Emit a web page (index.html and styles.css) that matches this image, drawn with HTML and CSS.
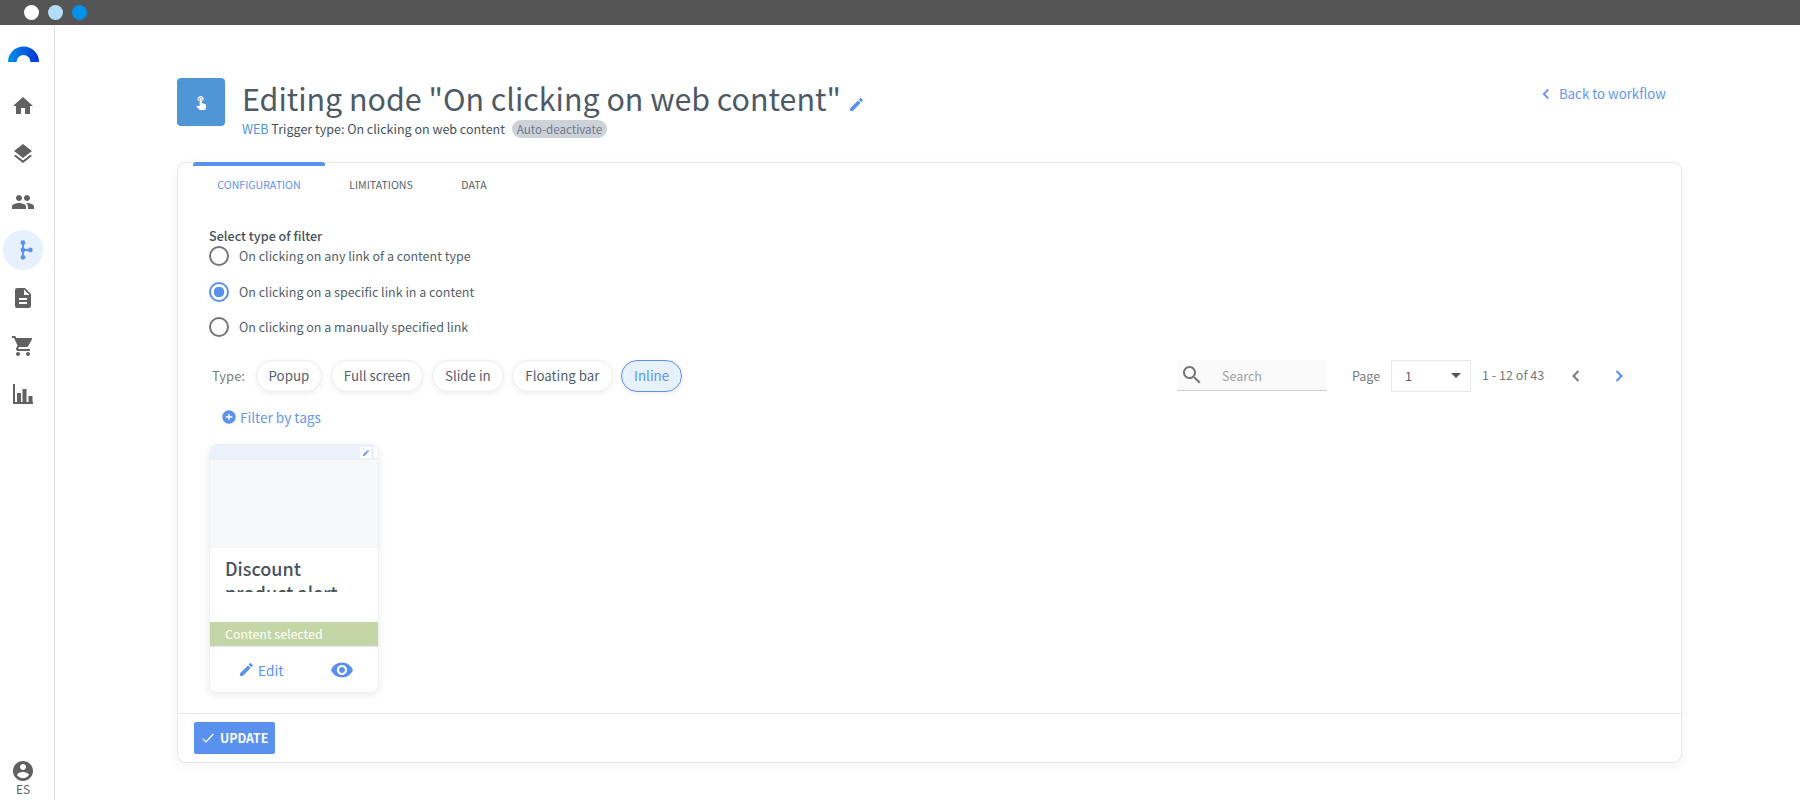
FILE: index.html
```html
<!DOCTYPE html>
<html lang="en">
<head>
<meta charset="utf-8">
<title>Editing node</title>
<link rel="stylesheet" href="styles.css">
</head>
<body>
<div class="topbar"><span class="dot dot-white"></span><span class="dot dot-light"></span><span class="dot dot-blue"></span></div>
<div class="app">
  <aside class="sidebar">
    <svg class="logo" viewBox="0 0 31 16"><defs><linearGradient id="lg" x1="0" x2="1" y1="0" y2="0"><stop offset="0" stop-color="#0091ea"/><stop offset="1" stop-color="#0035d4"/></linearGradient></defs><path fill="url(#lg)" d="M0 16A15.5 15.5 0 0 1 31 16H22.5A7 7 0 0 0 8.5 16Z"/></svg>
    <nav class="nav">
      <a class="nav-item"><svg viewBox="0 0 24 24"><path d="M10 20v-6h4v6h5v-8h3L12 3 2 12h3v8z"/></svg></a>
      <a class="nav-item"><svg viewBox="0 0 24 24"><path d="M11.99 18.54l-7.37-5.73L3 14.07l9 7 9-7-1.63-1.27-7.38 5.74zM12 16l7.36-5.73L21 9l-9-7-9 7 1.63 1.27L12 16z"/></svg></a>
      <a class="nav-item"><svg viewBox="0 0 24 24"><path d="M16 11c1.66 0 2.99-1.34 2.99-3S17.66 5 16 5c-1.66 0-3 1.34-3 3s1.34 3 3 3zm-8 0c1.66 0 2.99-1.34 2.99-3S9.66 5 8 5C6.34 5 5 6.34 5 8s1.34 3 3 3zm0 2c-2.33 0-7 1.17-7 3.5V19h14v-2.5c0-2.33-4.67-3.5-7-3.5zm8 0c-.29 0-.62.02-.97.05 1.16.84 1.97 1.97 1.97 3.45V19h6v-2.5c0-2.33-4.67-3.5-7-3.5z"/></svg></a>
      <a class="nav-item nav-active"><svg class="flow" viewBox="0 0 24 24"><path d="M11 3h2v18h-2zM12 11h9v2h-9z"/><circle cx="12" cy="4" r="2.6"/><circle cx="12" cy="12" r="2.6"/><circle cx="20" cy="12" r="2.6"/><circle cx="12" cy="20" r="2.6"/></svg></a>
      <a class="nav-item"><svg viewBox="0 0 24 24"><path d="M14 2H6c-1.1 0-1.99.9-1.99 2L4 20c0 1.1.89 2 1.99 2H18c1.1 0 2-.9 2-2V8l-6-6zm2 16H8v-2h8v2zm0-4H8v-2h8v2zm-3-5V3.5L18.5 9H13z"/></svg></a>
      <a class="nav-item"><svg viewBox="0 0 24 24"><path d="M7 18c-1.1 0-1.99.9-1.99 2S5.9 22 7 22s2-.9 2-2-.9-2-2-2zM1 2v2h2l3.6 7.59-1.35 2.45c-.16.28-.25.61-.25.96 0 1.1.9 2 2 2h12v-2H7.42c-.14 0-.25-.11-.25-.25l.03-.12.9-1.63h7.45c.75 0 1.41-.41 1.75-1.03l3.58-6.49c.08-.14.12-.31.12-.48 0-.55-.45-1-1-1H5.21l-.94-2H1zm16 16c-1.1 0-1.99.9-1.99 2s.89 2 1.99 2 2-.9 2-2-.9-2-2-2z"/></svg></a>
      <a class="nav-item"><svg viewBox="0 0 24 24"><path d="M2 2h2v18h18v2H2zM6 11h4v9H6zM11.500 7h4v13h-4zM17.500 14h4v6h-4z"/></svg></a>
    </nav>
    <div class="profile">
      <svg viewBox="0 0 24 24"><path d="M12 2C6.48 2 2 6.48 2 12s4.48 10 10 10 10-4.48 10-10S17.52 2 12 2zm0 3c1.66 0 3 1.34 3 3s-1.34 3-3 3-3-1.34-3-3 1.34-3 3-3zm0 14.2c-2.5 0-4.71-1.28-6-3.22.03-1.99 4-3.08 6-3.08 1.99 0 5.97 1.09 6 3.08-1.29 1.94-3.5 3.22-6 3.22z"/></svg>
      <span>ES</span>
    </div>
  </aside>
  <main class="main">
    <header class="header">
      <div class="node-icon"><svg viewBox="0 0 24 24"><path d="M9 11.24V7.5C9 6.12 10.12 5 11.5 5S14 6.12 14 7.5v3.74c1.21-.81 2-2.18 2-3.74C16 5.01 13.99 3 11.5 3S7 5.01 7 7.5c0 1.56.79 2.93 2 3.74zm9.84 4.63l-4.54-2.26c-.17-.07-.35-.11-.54-.11H13v-6c0-.83-.67-1.5-1.5-1.5S10 6.67 10 7.5v10.74l-3.43-.72c-.08-.01-.15-.03-.24-.03-.31 0-.59.13-.79.33l-.79.8 4.94 4.94c.27.27.65.44 1.06.44h6.79c.75 0 1.33-.55 1.44-1.28l.75-5.27c.01-.07.02-.14.02-.2 0-.62-.38-1.16-.91-1.38z"/></svg></div>
      <div class="heading">
        <h1 class="title">Editing node "On clicking on web content" <svg class="title-edit" viewBox="0 0 24 24"><path d="M3 17.25V21h3.75L17.81 9.94l-3.75-3.75L3 17.25zM20.71 7.04c.39-.39.39-1.02 0-1.41l-2.34-2.34c-.39-.39-1.02-.39-1.41 0l-1.83 1.83 3.75 3.75 1.83-1.83z"/></svg></h1>
        <div class="subtitle"><span class="web">WEB</span> Trigger type: On clicking on web content <span class="badge">Auto-deactivate</span></div>
      </div>
      <a class="back"><svg viewBox="0 0 24 24"><path d="M15 6l-6 6 6 6"/></svg>Back to workflow</a>
    </header>
    <section class="card">
      <div class="tabs">
        <a class="tab tab-active">CONFIGURATION</a>
        <a class="tab">LIMITATIONS</a>
        <a class="tab">DATA</a>
      </div>
      <div class="body">
        <div class="filter-label">Select type of filter</div>
        <label class="radio"><span class="radio-dot"></span>On clicking on any link of a content type</label>
        <label class="radio"><span class="radio-dot radio-on"></span>On clicking on a specific link in a content</label>
        <label class="radio"><span class="radio-dot"></span>On clicking on a manually specified link</label>
        <div class="toolbar">
          <div class="types">
            <span class="type-label">Type:</span>
            <span class="pill">Popup</span>
            <span class="pill">Full screen</span>
            <span class="pill">Slide in</span>
            <span class="pill">Floating bar</span>
            <span class="pill pill-on">Inline</span>
          </div>
          <div class="search"><svg viewBox="0 0 24 24"><path d="M15.5 14h-.79l-.28-.27C15.41 12.59 16 11.11 16 9.5 16 5.91 13.09 3 9.5 3S3 5.91 3 9.5 5.91 16 9.5 16c1.61 0 3.09-.59 4.23-1.57l.27.28v.79l5 4.99L20.49 19l-4.99-5zm-6 0C7.01 14 5 11.99 5 9.5S7.01 5 9.5 5 14 7.01 14 9.5 11.99 14 9.5 14z"/></svg><span>Search</span></div>
          <span class="page-label">Page</span>
          <div class="select"><span>1</span><i class="caret"></i></div>
          <span class="range">1 - 12 of 43</span>
          <svg class="chev chev-prev" viewBox="0 0 24 24"><path d="M15 6l-6 6 6 6"/></svg>
          <svg class="chev chev-next" viewBox="0 0 24 24"><path d="M9 6l6 6-6 6"/></svg>
        </div>
        <a class="tags"><svg viewBox="0 0 24 24"><path d="M12 2C6.48 2 2 6.48 2 12s4.48 10 10 10 10-4.48 10-10S17.52 2 12 2zm5 11h-4v4h-2v-4H7v-2h4V7h2v4h4v2z"/></svg>Filter by tags</a>
        <article class="content">
          <div class="content-top"><span class="mini"><svg viewBox="0 0 24 24"><path d="M3 17.25V21h3.75L17.81 9.94l-3.75-3.75L3 17.25zM20.71 7.04c.39-.39.39-1.02 0-1.41l-2.34-2.34c-.39-.39-1.02-.39-1.41 0l-1.83 1.83 3.75 3.75 1.83-1.83z"/></svg></span><span class="mini mini-cut"></span></div>
          <div class="content-img"></div>
          <div class="content-name"><h3>Discount product alert</h3></div>
          <div class="content-sel">Content selected</div>
          <div class="content-actions">
            <a class="edit"><svg viewBox="0 0 24 24"><path d="M3 17.25V21h3.75L17.81 9.94l-3.75-3.75L3 17.25zM20.71 7.04c.39-.39.39-1.02 0-1.41l-2.34-2.34c-.39-.39-1.02-.39-1.41 0l-1.83 1.83 3.75 3.75 1.83-1.83z"/></svg>Edit</a>
            <svg class="eye" viewBox="0 0 24 24"><path d="M12 4.5C7 4.5 2.73 7.61 1 12c1.73 4.39 6 7.5 11 7.5s9.27-3.11 11-7.5c-1.73-4.39-6-7.5-11-7.5zM12 17c-2.76 0-5-2.24-5-5s2.24-5 5-5 5 2.24 5 5-2.24 5-5 5zm0-8c-1.66 0-3 1.34-3 3s1.34 3 3 3 3-1.34 3-3-1.34-3-3-3z"/></svg>
          </div>
        </article>
      </div>
      <footer class="footer">
        <button class="update"><svg viewBox="0 0 24 24"><path d="M4 13l5 5L20 6"/></svg>UPDATE</button>
      </footer>
    </section>
  </main>
</div>
</body>
</html>
```
FILE: styles.css
```css
* { box-sizing: border-box; }
html, body { margin: 0; height: 800px; overflow: hidden; background: #fff; }
body { font-family: "Noto Sans CJK JP", "Noto Sans", sans-serif; color: #47525d; }
a { color: inherit; text-decoration: none; }

.topbar { height: 25px; background: #555; display: flex; align-items: center; gap: 9px; padding-left: 24px; }
.dot { width: 15px; height: 15px; border-radius: 50%; }
.dot-white { background: #fff; }
.dot-light { background: #b3dcf9; }
.dot-blue { background: #0091ea; }

.app { display: flex; height: 775px; }
.sidebar { width: 55px; flex: none; border-right: 1px solid #dcdcdc; margin-top: 1px; display: flex; flex-direction: column; align-items: flex-start; padding-top: 20px; }
.logo { width: 31px; height: 16px; margin-left: 8px; display: block; }
.nav { margin-top: 24px; display: flex; flex-direction: column; gap: 8px; margin-left: 3px; }
.nav-item { width: 40px; height: 40px; border-radius: 50%; display: flex; align-items: center; justify-content: center; }
.nav-item svg { width: 24px; height: 24px; fill: #616161; }
.nav-active { background: #e6f1fd; }
.nav-item .flow { fill: #5b91ee; width: 22px; height: 22px; }
.profile { margin-top: auto; margin-bottom: 5px; margin-left: 11px; width: 24px; display: flex; flex-direction: column; align-items: center; font-size: 12px; line-height: 13px; color: #5f5f5f; }
.profile svg { width: 24px; height: 24px; fill: #616161; margin-bottom: -1px; }

.main { flex: 1; min-width: 0; padding: 53px 118px 0 122px; }
.header { display: flex; align-items: flex-start; height: 84px; }
.node-icon { width: 48px; height: 48px; background: #4f96d6; border-radius: 4px; display: flex; align-items: center; justify-content: center; flex: none; margin-right: 17px; }
.node-icon svg { width: 16px; height: 16px; fill: #fff; }
.heading { flex: 1; }
.title { margin: 0; font-size: 30.4px; line-height: 40px; font-weight: 400; color: #4d5a66; white-space: nowrap; }
.title-edit { width: 17px; height: 17px; fill: #5b91ee; vertical-align: -2px; }
.subtitle { font-size: 12.5px; line-height: 20px; color: #47525d; margin-top: 1px; }
.web { color: #4f96d6; }
.badge { display: inline-block; margin-left: 4px; background: #cdd2d9; color: #6c7a92; font-size: 11.6px; line-height: 18px; height: 18px; padding: 0 5px; border-radius: 9px; }
.back { display: flex; align-items: center; font-size: 13.3px; line-height: 20px; color: #6497ec; margin-top: 6px; margin-right: 16px; }
.back svg { width: 18px; height: 18px; fill: none; stroke: #6497ec; stroke-width: 2.4; margin-right: 4px; }

.card { height: 601px; border: 1px solid #e8e8e8; border-radius: 9px; box-shadow: 0 3px 12px rgba(0,0,0,.05); display: flex; flex-direction: column; background: #fff; }
.tabs { display: flex; height: 43px; padding-left: 15px; margin-top: -1px; }
.tab { font-size: 10.6px; line-height: 16px; width: 132px; padding-top: 15px; text-align: center; color: #55606b; height: 43px; }
.tab:nth-child(2) { width: 112px; }
.tab:nth-child(3) { width: 74px; }
.tab-active { color: #5b91ee; border-top: 4px solid #5b91ee; padding-top: 11px; border-radius: 3px 3px 0 0; }
.body { flex: 1; padding: 22px 0 0 31px; min-height: 0; }
.filter-label { font-size: 12.6px; line-height: 18px; font-weight: 500; }
.radio { display: flex; align-items: center; height: 20px; font-size: 12.5px; line-height: 20px; color: #55606b; margin-bottom: 15.5px; position: relative; top: 1px; }
.radio-dot { width: 20px; height: 20px; border: 2px solid #757575; border-radius: 50%; margin-right: 10px; flex: none; display: flex; }
.radio-on { border-color: #5b91ee; background: radial-gradient(circle, #5b91ee 0 5px, #fff 5.6px); }

.toolbar { display: flex; align-items: center; height: 33px; margin-top: 23px; padding-right: 52px; }
.types { display: flex; align-items: center; gap: 8.6px; margin-left: 3px; }
.type-label { font-size: 13px; color: #7b7b7b; margin-right: 2px; line-height: 20px; }
.pill { height: 32px; border: 1px solid #eeeeee; border-radius: 16px; padding: 0 12px; font-size: 13.3px; line-height: 29px; background: #fff; color: #55606b; box-shadow: 0 2px 6px rgba(0,0,0,.06); }
.pill-on { background: #e6f1fd; border-color: #5b91ee; color: #5b91ee; }
.search { margin-left: auto; width: 150px; height: 31px; background: #fafafa; border-bottom: 1px solid #cfcfcf; display: flex; align-items: center; font-size: 12.5px; color: #a0a0a0; padding-left: 3px; }
.search svg { width: 24px; height: 24px; fill: #757575; margin-right: 18px; }
.page-label { font-size: 12.5px; color: #7b7b7b; margin-left: 25px; width: 39px; }
.select { width: 80px; height: 32px; border: 1px solid #eaeaea; display: flex; align-items: center; justify-content: space-between; padding: 0 9px 0 13px; font-size: 12.5px; color: #55606b; }
.caret { width: 0; height: 0; border-left: 5px solid transparent; border-right: 5px solid transparent; border-top: 5px solid #555; }
.range { font-size: 12.6px; color: #7b7b7b; margin-left: 11px; margin-bottom: 2px; width: 84px; white-space: nowrap; }
.chev { width: 20px; height: 20px; fill: none; stroke-width: 2.4; }
.chev-prev { stroke: #757575; }
.chev-next { stroke: #4f8ef0; margin-left: 23px; }

.tags { display: flex; align-items: center; font-size: 13.6px; line-height: 20px; color: #6497ec; margin: 15px 0 0 12px; }
.tags svg { width: 16px; height: 16px; fill: #5b91ee; margin-right: 3px; }

.content { width: 170px; height: 249px; margin-top: 17px; border: 1px solid #f0f0f0; border-radius: 8px; box-shadow: 0 2px 8px rgba(0,0,0,.08); overflow: hidden; display: flex; flex-direction: column; }
.content-top { height: 15px; background: #ebf1fb; display: flex; justify-content: flex-end; gap: 3px; padding-top: 2px; flex: none; }
.mini { width: 11px; height: 11px; background: #fff; display: flex; align-items: center; justify-content: center; }
.mini-cut { width: 4px; }
.mini svg { width: 8px; height: 8px; fill: #5b91ee; }
.content-img { height: 88px; background: #f7f8fa; flex: none; }
.content-name { height: 74px; padding: 8px 15px 0; flex: none; }
.content-name h3 { margin: 0; font-size: 18px; line-height: 24px; font-weight: 500; color: #47525d; height: 36px; overflow: hidden; }
.content-sel { height: 24px; background: #c4d6a5; border-bottom: 1px solid #c9d3b8; color: #fff; font-size: 12.4px; line-height: 25px; padding-left: 15px; flex: none; overflow: hidden; }
.content-actions { flex: 1; display: flex; align-items: center; border-top: 1px solid #e6e6e6; padding: 0 0 0 28px; color: #5b91ee; font-size: 13.7px; }
.edit { display: flex; align-items: center; line-height: 20px; width: 92px; }
.edit svg { width: 17px; height: 17px; fill: #5b91ee; margin-right: 3px; }
.eye { width: 24px; height: 24px; fill: #5b91ee; }

.footer { height: 49px; border-top: 1px solid #e4e4e4; padding: 8px 0 0 16px; flex: none; }
.update { width: 81px; height: 32px; border: 0; border-radius: 2px; background: #5b91ee; color: #fff; font-family: inherit; font-size: 12.3px; font-weight: 700; display: flex; align-items: center; padding: 0 0 0 6px; }
.update svg { width: 16px; height: 16px; fill: none; stroke: #fff; stroke-width: 1.8; margin-right: 4px; }
```
